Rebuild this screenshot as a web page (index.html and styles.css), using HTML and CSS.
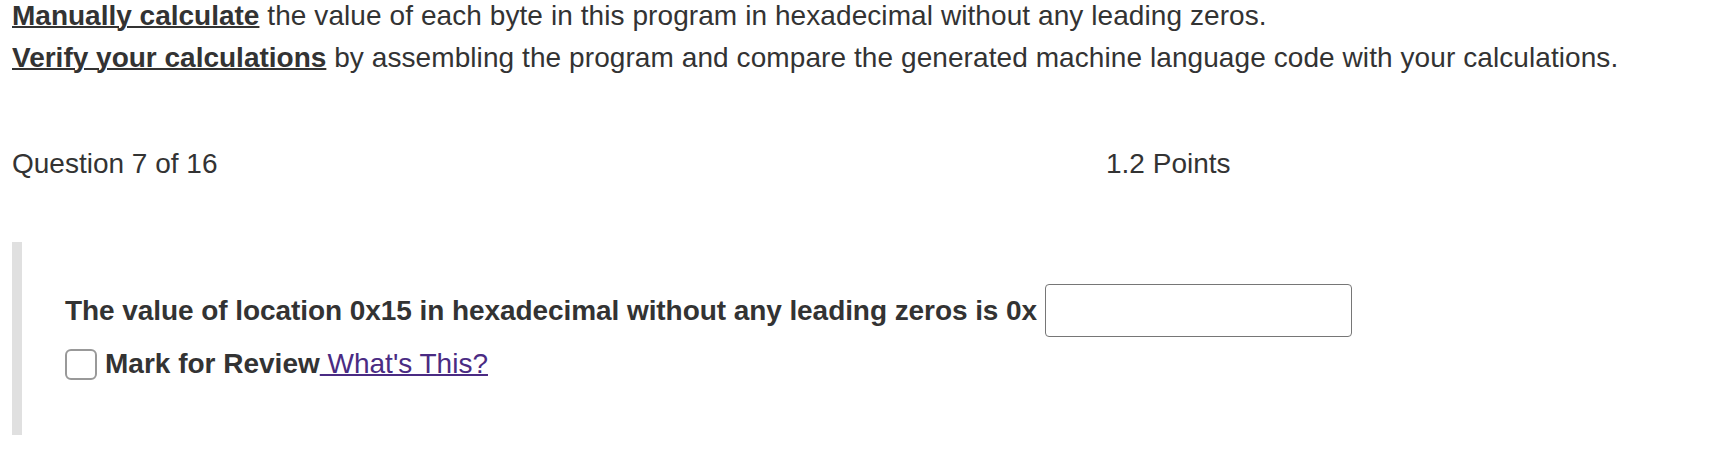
FILE: index.html
```html
<!DOCTYPE html>
<html lang="en">
<head>
    <meta charset="UTF-8">
    <meta name="viewport" content="width=device-width, initial-scale=1.0">
    <title>Question 7 of 16</title>
    <link rel="stylesheet" href="styles.css">
</head>
<body>
    <p class="instructions">
        <b><u>Manually calculate</u></b> the value of each byte in this program in hexadecimal without any leading zeros.<br>
        <b><u>Verify your calculations</u></b> by assembling the program and compare the generated machine language code with your calculations.
    </p>

    <div class="question-header">
        <div class="question-number">Question 7 of 16</div>
        <div class="question-points">1.2 Points</div>
    </div>

    <div class="question-body">
        <div class="answer-row">
            <span class="prompt">The value of location 0x15 in hexadecimal without any leading zeros is 0x</span>
            <input type="text" class="answer-input">
        </div>
        <div class="review-row">
            <input type="checkbox" class="review-check" id="review">
            <label for="review" class="review-label"><b>Mark for Review</b><a href="#"> What's This?</a></label>
        </div>
    </div>
</body>
</html>
```

FILE: styles.css
```css
body {
    font-family: "Liberation Sans", Arial, sans-serif;
    font-size: 28px;
    line-height: 42px;
    color: #333;
    margin: 0;
    padding: 0 12px;
    background-color: white;
}
.instructions {
    margin: -5px 0 0;
    letter-spacing: 0.08px;
}
.instructions b {
    letter-spacing: 0;
}
.instructions u {
    text-decoration-thickness: 2px;
}

/* Question header */
.question-header {
    display: flex;
    margin-top: 64px;
}
.question-number {
    width: 1094px;
}

/* Question body */
.question-body {
    margin-top: 57px;
    border-left: 10px solid #e0e0e0;
    padding: 42px 0 50px 43px;
}
.answer-row {
    display: flex;
    align-items: center;
    gap: 8px;
}
.prompt {
    font-weight: bold;
    letter-spacing: -0.07px;
}
.answer-input {
    width: 307px;
    height: 53px;
    box-sizing: border-box;
    border: 1px solid #767676;
    border-radius: 4px;
    font-size: 28px;
    padding: 0 10px;
    margin: 0;
}
.review-row {
    display: flex;
    align-items: center;
    gap: 8px;
    margin-top: 6px;
}
.review-check {
    appearance: none;
    -webkit-appearance: none;
    width: 32px;
    height: 31px;
    margin: 0;
    border: 2px solid #999;
    border-radius: 6px;
    background-color: white;
    box-sizing: border-box;
}
.review-label a {
    color: #4a2b83;
    text-decoration-thickness: 2px;
}
```
